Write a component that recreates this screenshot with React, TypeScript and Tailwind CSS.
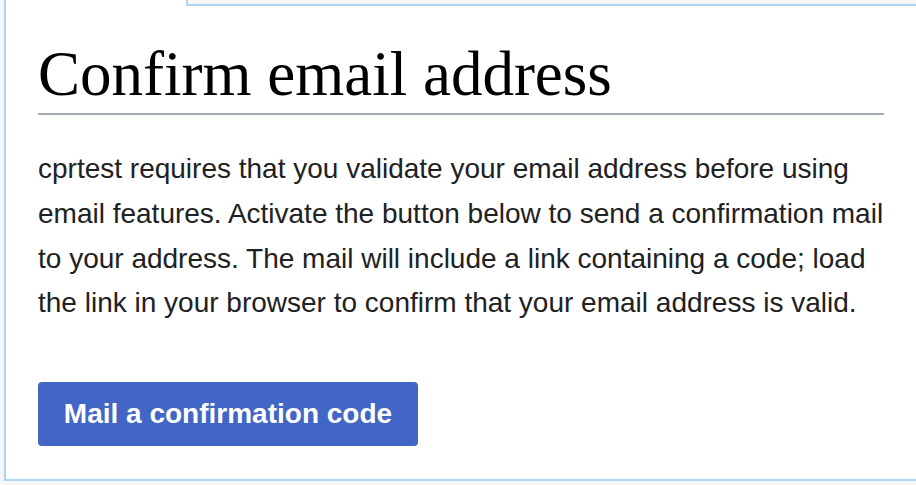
import React from 'react';

// ─── Confirm email page (wiki-style special page) ───────────────────────────
export default function App() {
  return (
    <div className="w-[916px] h-[485px] bg-[#f6f6f6] pl-1 overflow-hidden">
      {/* tab strip: selected tab merges into the content box */}
      <div className="flex h-[6px]">
        <div className="w-[182px] bg-white border-l-2 border-[#acd5f5]" />
        <div className="flex-1 bg-[#f6f6f6] border-l-2 border-b-2 border-[#acd5f5]" />
      </div>

      <div className="h-[475px] bg-white border-l-2 border-b-2 border-[#acd5f5] px-8 pt-[32px]">
        <h1
          className="pb-[3px] border-b-2 border-[#a2a9b1] text-black text-[63px] leading-[72px] font-normal"
          style={{ fontFamily: '"Liberation Serif", Georgia, serif' }}
        >
          Confirm email address
        </h1>

        <p
          className="mt-[32px] text-[#202122] text-[28px] leading-[1.6]"
          style={{ fontFamily: '"Liberation Sans", Arial, sans-serif' }}
        >
          cprtest requires that you validate your email address before using email features. Activate the button below to send a confirmation mail to your address. The mail will include a link containing a code; load the link in your browser to confirm that your email address is valid.
        </p>

        <button
          className="mt-[56px] w-[380px] h-[64px] rounded-[4px] bg-[#4166c5] text-white text-[28px] font-bold flex items-center justify-center"
          style={{ fontFamily: '"Liberation Sans", Arial, sans-serif' }}
        >
          Mail a confirmation code
        </button>
      </div>
    </div>
  );
}
